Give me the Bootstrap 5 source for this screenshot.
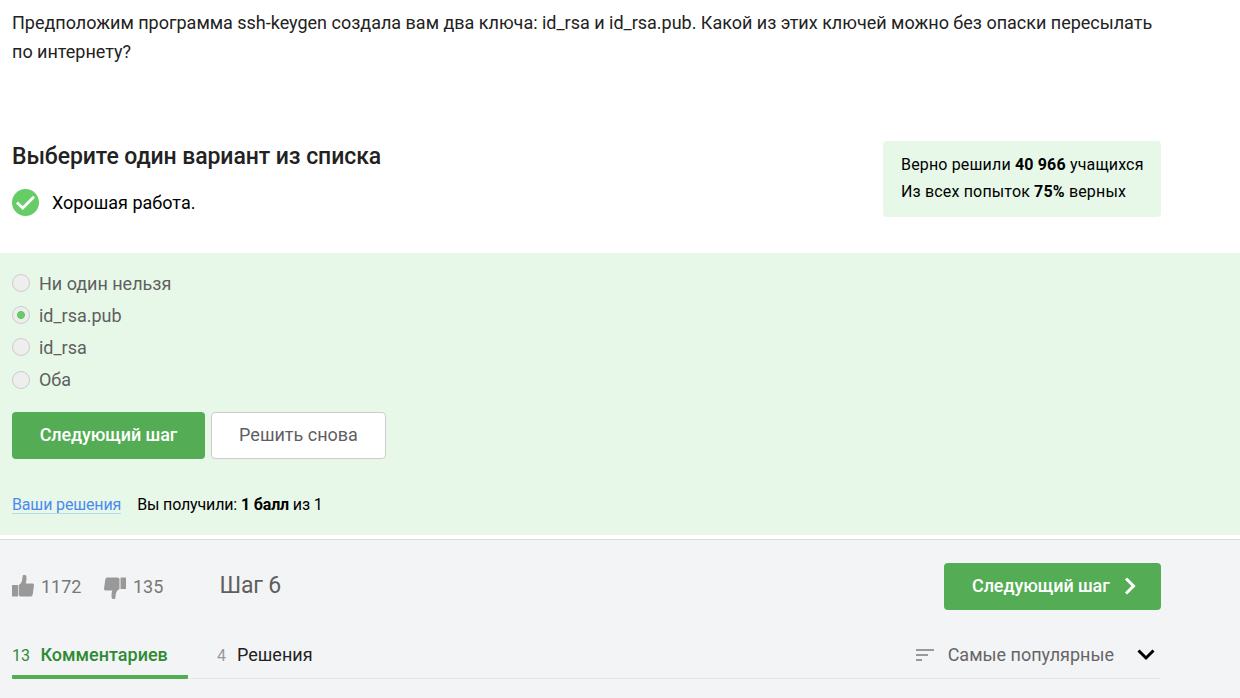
<!DOCTYPE html>
<html lang="ru">
<head>
<meta charset="utf-8">
<meta name="viewport" content="width=device-width, initial-scale=1">
<title>Шаг 6</title>
<link href="https://cdn.jsdelivr.net/npm/bootstrap@5.3.0/dist/css/bootstrap.min.css" rel="stylesheet">
<style>
body{font-family:Roboto,"Noto Sans",sans-serif;font-size:18px;color:#000;overflow:hidden}
.page-col{width:1161px;padding-left:12px}
.question{height:141px;padding-top:8px;line-height:29px;color:#222;letter-spacing:-.01px}
.head-row{height:112px}
.quiz-title{font-size:23px;font-weight:500;line-height:30px;padding-top:1px;color:#222;letter-spacing:-.08px}
.hint{margin-top:16px;line-height:28px;gap:13px}
.hint span{padding-top:1px}
.stats{width:278px;height:76px;padding:10px 0 0 18px;font-size:16px;line-height:27px;letter-spacing:.16px;background:#e7f8e9;border-radius:4px}
.quiz{height:282px;background:#e7f8e9}
.options{padding-top:14px}
.option{height:32.2px;gap:9px;color:#5f5f5f;letter-spacing:-.02px}
.option .form-check-input{width:18px;height:18px;margin:0;background-color:#eee;border:1px solid #ccc;opacity:1}
.option .form-check-input:checked{background-color:#eee;background-image:radial-gradient(circle,#6c6 3.6px,transparent 4.4px)}
.actions{margin-top:16px;gap:6px}
.btn{--bs-btn-font-size:18px;--bs-btn-border-radius:4px;height:47px;padding:0 0 2px}
.btn-step{background:#54ad54;color:#fff;font-weight:500;letter-spacing:-.1px;width:193px}
.btn-next{width:217px;padding-left:27px;gap:14px}
.btn-next svg{margin-top:1px}
.btn-again{background:#fff;border:1px solid #ccc;color:#5f5f5f;width:175px}
.result{margin-top:34px;font-size:16px;line-height:24px;gap:16px;letter-spacing:-.15px}
.result a{color:#4d8af0;text-decoration:none;line-height:16px;padding-top:2px;border-bottom:1px solid #b3dbe8}
b{font-weight:700}
.footer-area{margin-top:4px;height:159px;border-top:1px solid #d8d9dc;background:#f3f4f6}
.votes{height:47px;margin-top:23px;color:#777}
.vote{gap:7px}
.vote-up{width:92px}
.vote-down{width:115.5px}
.step-name{font-size:23px;color:#5f5f5f;letter-spacing:-.2px}
.tabs-row{height:49px;margin-left:12px;width:1149px;margin-top:20px;border-bottom:1px solid #e4e6ea}
.tab-item{height:49px;line-height:49px;color:#666}
.tab-item.active{width:176px;border-bottom:4px solid #54ad54;border-radius:1px;color:#2f8a34}
.tab-item .count{font-size:16px;margin-right:11px}
.tab-item.active .count{margin-right:10.5px}
.tab-name{font-weight:500}
.tab-second{margin-left:29px;color:#222}
.tab-second .count{color:#999}
.sort-name{margin-left:14px}
.sort-arrow{margin:0 6px 0 23px}
</style>
</head>
<body>
<main>
  <section class="page-col">
    <p class="question mb-0">Предположим программа ssh-keygen создала вам два ключа: id_rsa и id_rsa.pub. Какой из этих ключей можно без опаски пересылать по интернету?</p>
    <div class="head-row d-flex justify-content-between align-items-start">
      <div>
        <h2 class="quiz-title mb-0">Выберите один вариант из списка</h2>
        <div class="hint d-flex align-items-center">
          <svg width="27" height="27" viewBox="0 0 27 27"><circle cx="13.5" cy="13.5" r="13.5" fill="#6c6"/><path d="M5 13.5l5.800 5.600L22 7.800" fill="none" stroke="#fff" stroke-width="2.8"/></svg>
          <span>Хорошая работа.</span>
        </div>
      </div>
      <div class="stats">
        <div>Верно решили <b>40 966</b> учащихся</div>
        <div>Из всех попыток <b>75%</b> верных</div>
      </div>
    </div>
  </section>
  <section class="quiz">
    <div class="page-col">
      <div class="options">
        <label class="option d-flex align-items-center"><input class="form-check-input" type="radio" name="answer"><span>Ни один нельзя</span></label>
        <label class="option d-flex align-items-center"><input class="form-check-input" type="radio" name="answer" checked><span>id_rsa.pub</span></label>
        <label class="option d-flex align-items-center"><input class="form-check-input" type="radio" name="answer"><span>id_rsa</span></label>
        <label class="option d-flex align-items-center"><input class="form-check-input" type="radio" name="answer"><span>Оба</span></label>
      </div>
      <div class="actions d-flex">
        <button class="btn btn-step">Следующий шаг</button>
        <button class="btn btn-again">Решить снова</button>
      </div>
      <div class="result d-flex align-items-center">
        <a href="#">Ваши решения</a>
        <span>Вы получили: <b>1 балл</b> из 1</span>
      </div>
    </div>
  </section>
  <section class="footer-area overflow-hidden">
    <div class="page-col votes d-flex align-items-center">
      <div class="vote vote-up d-flex align-items-center">
        <svg width="22" height="24" viewBox="0 0 22 24" fill="#999"><path d="M.5 10H5.500q.5 0 .5.500V21q0 .5-.5.500H.5Q0 21.500 0 21V10.500Q0 10 .5 10z"/><path d="M6.700 10C9.500 8.500 10.300 6 10.500 2 10.500.3 11.300-.3 12.300-.3c1.700 0 2.200 1.500 2.200 3.300 0 2-.4 4-.7 5.500H20.500c1 0 1.500.7 1.500 1.700L20.700 19.500c-.3 1.400-1.200 2-2.500 2H9.500c-1.500 0-2-.5-2.800-1z"/></svg>
        <span>1172</span>
      </div>
      <div class="vote vote-down d-flex align-items-center">
        <svg width="22" height="24" viewBox="0 0 22 24" fill="#999"><g transform="rotate(180 11 12)"><path d="M.5 10H5q.5 0 .5.500V21q0 .5-.5.500H.5Q0 21.500 0 21V10.500Q0 10 .5 10z"/><path d="M6.500 10C9.500 8.500 10.300 6 10.500 2 10.500.3 11.300-.3 12.300-.3c1.700 0 2.200 1.500 2.200 3.300 0 2-.4 4-.7 5.500H20.500c1 0 1.500.7 1.500 1.700L20.700 19.500c-.3 1.400-1.200 2-2.500 2H9.500c-1.500 0-2-.5-3-1z"/></g></svg>
        <span>135</span>
      </div>
      <span class="step-name">Шаг 6</span>
      <button class="btn btn-step btn-next ms-auto d-flex align-items-center">Следующий шаг
        <svg width="12" height="18" viewBox="0 0 12 18"><path d="M2 1.500L9.500 9 2 16.500" fill="none" stroke="#fff" stroke-width="3"/></svg>
      </button>
    </div>
    <div class="tabs-row d-flex">
      <div class="tab-item active"><span class="count">13</span><span class="tab-name">Комментариев</span></div>
      <div class="tab-item tab-second"><span class="count">4</span><span>Решения</span></div>
      <div class="tab-item ms-auto d-flex align-items-center">
        <svg width="18" height="12" viewBox="0 0 18 12" fill="#999"><path d="M0 0h18v2H0zM0 5h12v2H0zM0 10h6v2H0z"/></svg>
        <span class="sort-name">Самые популярные</span>
        <svg class="sort-arrow" width="18" height="12" viewBox="0 0 18 12"><path d="M1.500 1.500L9 9l7.500-7.500" fill="none" stroke="#000" stroke-width="3"/></svg>
      </div>
    </div>
  </section>
</main>
<script src="https://cdn.jsdelivr.net/npm/bootstrap@5.3.0/dist/js/bootstrap.bundle.min.js"></script>
</body>
</html>
